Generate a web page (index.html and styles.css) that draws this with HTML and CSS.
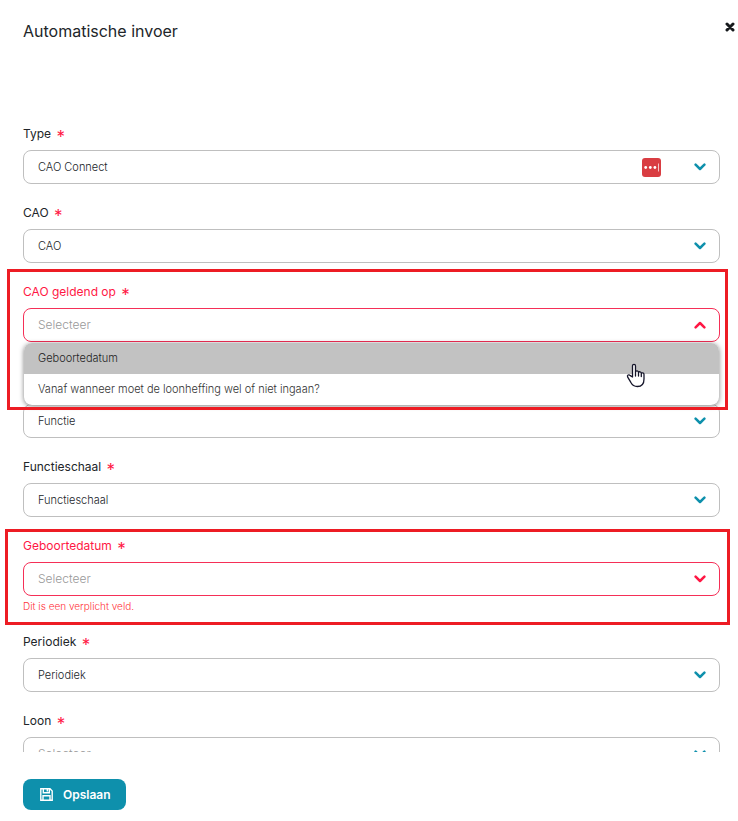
FILE: index.html
```html
<!DOCTYPE html>
<html lang="nl">
<head>
<meta charset="utf-8">
<meta name="viewport" content="width=device-width, initial-scale=1">
<title>Automatische invoer</title>
<link rel="stylesheet" href="styles.css">
</head>
<body>
<svg class="sprite" aria-hidden="true">
  <symbol id="chevron" viewBox="0 0 12 8"><path d="M1.600 1.700 6 6 10.400 1.700" fill="none" stroke="currentColor" stroke-width="2.500" stroke-linecap="round" stroke-linejoin="round"/></symbol>
</svg>
<main class="dialog">
  <header class="dialog-header">
    <h1 class="title">Automatische invoer</h1>
    <button class="close" type="button" aria-label="Sluiten">
      <svg width="10" height="10" viewBox="0 0 10 10"><path d="M2 2l6 6M8 2L2 8" stroke="currentColor" stroke-width="3" stroke-linecap="round"/></svg>
    </button>
  </header>
  <form class="form" id="invoer">
    <div class="field">
      <label class="label" for="type">Type <span class="required">*</span></label>
      <div class="control">
        <select class="select" id="type"><option>CAO Connect</option></select>
        <svg class="manager" width="19" height="19" viewBox="0 0 19 19"><rect width="19" height="19" rx="3" fill="#d93d42"/><circle cx="3.700" cy="9.500" r="1.400" fill="#fff"/><circle cx="8.300" cy="9.500" r="1.400" fill="#fff"/><circle cx="12.900" cy="9.500" r="1.400" fill="#fff"/><path d="M16.500 5.500v8" stroke="#f3c4c5"/></svg>
        <svg class="chevron"><use href="#chevron"/></svg>
      </div>
    </div>
    <div class="field">
      <label class="label" for="cao">CAO <span class="required">*</span></label>
      <div class="control">
        <select class="select" id="cao"><option>CAO</option></select>
        <svg class="chevron"><use href="#chevron"/></svg>
      </div>
    </div>
    <div class="field invalid open">
      <label class="label" for="geldend">CAO geldend op <span class="required">*</span></label>
      <div class="control">
        <select class="select empty" id="geldend"><option>Selecteer</option></select>
        <svg class="chevron"><use href="#chevron"/></svg>
        <ul class="menu" role="listbox" aria-label="CAO geldend op">
          <li class="option active" role="option" aria-selected="true">Geboortedatum
            <svg class="pointer" width="20" height="25" viewBox="0 0 20 25"><path d="M6.500 14V3C6.500 .7 9.500 .7 9.500 3v6c.3-1.500 3-1.400 3 .5.400-1.200 2.800-.9 2.800.9.500-1 2.700-.7 2.700 1.100V16c0 4.800-2.500 7.500-6.600 7.500-3.400 0-5.200-1.500-6.700-4.300l-3-5C.7 12.200 2.800 11 4.300 12.600zM9.500 9v4M12.500 9.500V13M15.300 10.500V13.500" fill="#fff" stroke="#15152a" stroke-width="1.300" stroke-linejoin="round" stroke-linecap="round"/></svg>
          </li>
          <li class="option" role="option" aria-selected="false">Vanaf wanneer moet de loonheffing wel of niet ingaan?</li>
        </ul>
      </div>
      <div class="message"></div>
      <span class="frame frame-menu"></span>
    </div>
    <div class="field covered">
      <label class="label" for="functie">Functie <span class="required">*</span></label>
      <div class="control">
        <select class="select" id="functie"><option>Functie</option></select>
        <svg class="chevron"><use href="#chevron"/></svg>
      </div>
    </div>
    <div class="field">
      <label class="label" for="schaal">Functieschaal <span class="required">*</span></label>
      <div class="control">
        <select class="select" id="schaal"><option>Functieschaal</option></select>
        <svg class="chevron"><use href="#chevron"/></svg>
      </div>
    </div>
    <div class="field invalid">
      <label class="label" for="geboorte">Geboortedatum <span class="required">*</span></label>
      <div class="control">
        <select class="select empty" id="geboorte"><option>Selecteer</option></select>
        <svg class="chevron"><use href="#chevron"/></svg>
      </div>
      <div class="message">Dit is een verplicht veld.</div>
      <span class="frame frame-error"></span>
    </div>
    <div class="field">
      <label class="label" for="periodiek">Periodiek <span class="required">*</span></label>
      <div class="control">
        <select class="select" id="periodiek"><option>Periodiek</option></select>
        <svg class="chevron"><use href="#chevron"/></svg>
      </div>
    </div>
    <div class="field">
      <label class="label" for="loon">Loon <span class="required">*</span></label>
      <div class="control">
        <select class="select empty" id="loon"><option>Selecteer</option></select>
        <svg class="chevron"><use href="#chevron"/></svg>
      </div>
    </div>
  </form>
  <footer class="footer">
    <button class="save" type="submit" form="invoer">
      <svg width="13" height="13" viewBox="0 0 13 13" fill="none" stroke="currentColor" stroke-width="1.400"><path d="M.8.8h9.200l2.200 2.200v9.200H.8zM3.300.8v4h6v-4M3 12.200V7.800h7v4.400M7.300 1.500v2"/></svg>
      Opslaan
    </button>
  </footer>
</main>
</body>
</html>
```
FILE: styles.css
```css
* {
  box-sizing: border-box;
}

body {
  margin: 0;
  background: #fff;
  color: #212529;
  font-family: Inter, "Liberation Sans", sans-serif;
  font-size: 12px;
}

.sprite {
  display: none;
}

.dialog {
  display: flex;
  flex-direction: column;
  height: 100vh;
}

.dialog-header {
  display: flex;
  flex: none;
  justify-content: space-between;
  align-items: flex-start;
  height: 123px;
  padding: 19px 3px 0 23px;
}

.title {
  margin: 0;
  font-size: 16px;
  font-weight: 400;
  line-height: 24px;
}

.close {
  display: flex;
  padding: 3px 0;
  border: 0;
  background: none;
  color: #16191c;
}

.form {
  display: flex;
  flex: 1;
  flex-direction: column;
  gap: 18px;
  min-height: 0;
  padding: 0 18px 0 23px;
  overflow: hidden;
}

.field {
  position: relative;
  flex: none;
}

.label {
  display: block;
  height: 22px;
  margin-bottom: 5px;
  line-height: 22px;
}

.required {
  margin-left: 2px;
  color: #ff1744;
  font-size: 17px;
  line-height: 16px;
  vertical-align: -5px;
}

.control {
  position: relative;
}

.select {
  display: block;
  width: 100%;
  height: 34px;
  padding: 0 48px 1px 14px;
  border: 1px solid #bfbfbf;
  border-radius: 8px;
  appearance: none;
  background: #fff;
  color: #212529;
  font: inherit;
  font-size: 11px;
  font-weight: 300;
}

.empty {
  color: #999;
  font-size: 12px;
}

.chevron {
  position: absolute;
  top: 13px;
  right: 14px;
  width: 12px;
  height: 8px;
  color: #0e90ac;
  pointer-events: none;
}

.manager {
  position: absolute;
  top: 8px;
  right: 59px;
}

.invalid .label,
.invalid .chevron {
  color: #ff1744;
}

.invalid .select {
  border-color: #f52f57;
}

.covered .label {
  visibility: hidden;
}

.open .chevron {
  transform: rotate(180deg);
}

.message {
  height: 17px;
  color: #ff3038;
  font-size: 10px;
  font-weight: 300;
  line-height: 20px;
}

.menu {
  position: absolute;
  z-index: 2;
  top: 35px;
  right: 1px;
  left: 1px;
  margin: 0;
  padding: 0;
  border-radius: 8px;
  background: #fff;
  box-shadow: 0 1px 5px rgba(0, 0, 0, 0.5);
  list-style: none;
}

.option {
  position: relative;
  padding: 0 14px;
  color: #333;
  font-size: 11px;
  font-weight: 300;
  line-height: 31px;
}

.active {
  border-radius: 8px 8px 0 0;
  background: #c2c2c2;
  color: #1f1f1f;
}

.pointer {
  position: absolute;
  z-index: 1;
  top: 20px;
  right: 73px;
}

.frame {
  position: absolute;
  z-index: 3;
  border: 3px solid #ed1c24;
  pointer-events: none;
}

.frame-menu {
  inset: -12px -8px -51px -16px;
}

.frame-error {
  inset: -6px -10px -12px -18px;
}

.footer {
  flex: none;
  padding: 27px 23px 11px;
}

.save {
  display: flex;
  align-items: center;
  gap: 10px;
  height: 31px;
  padding: 0 15px 1px 17px;
  border: 0;
  border-radius: 8px;
  background: #0e90ac;
  color: #fff;
  font: inherit;
  font-weight: 600;
}
```
